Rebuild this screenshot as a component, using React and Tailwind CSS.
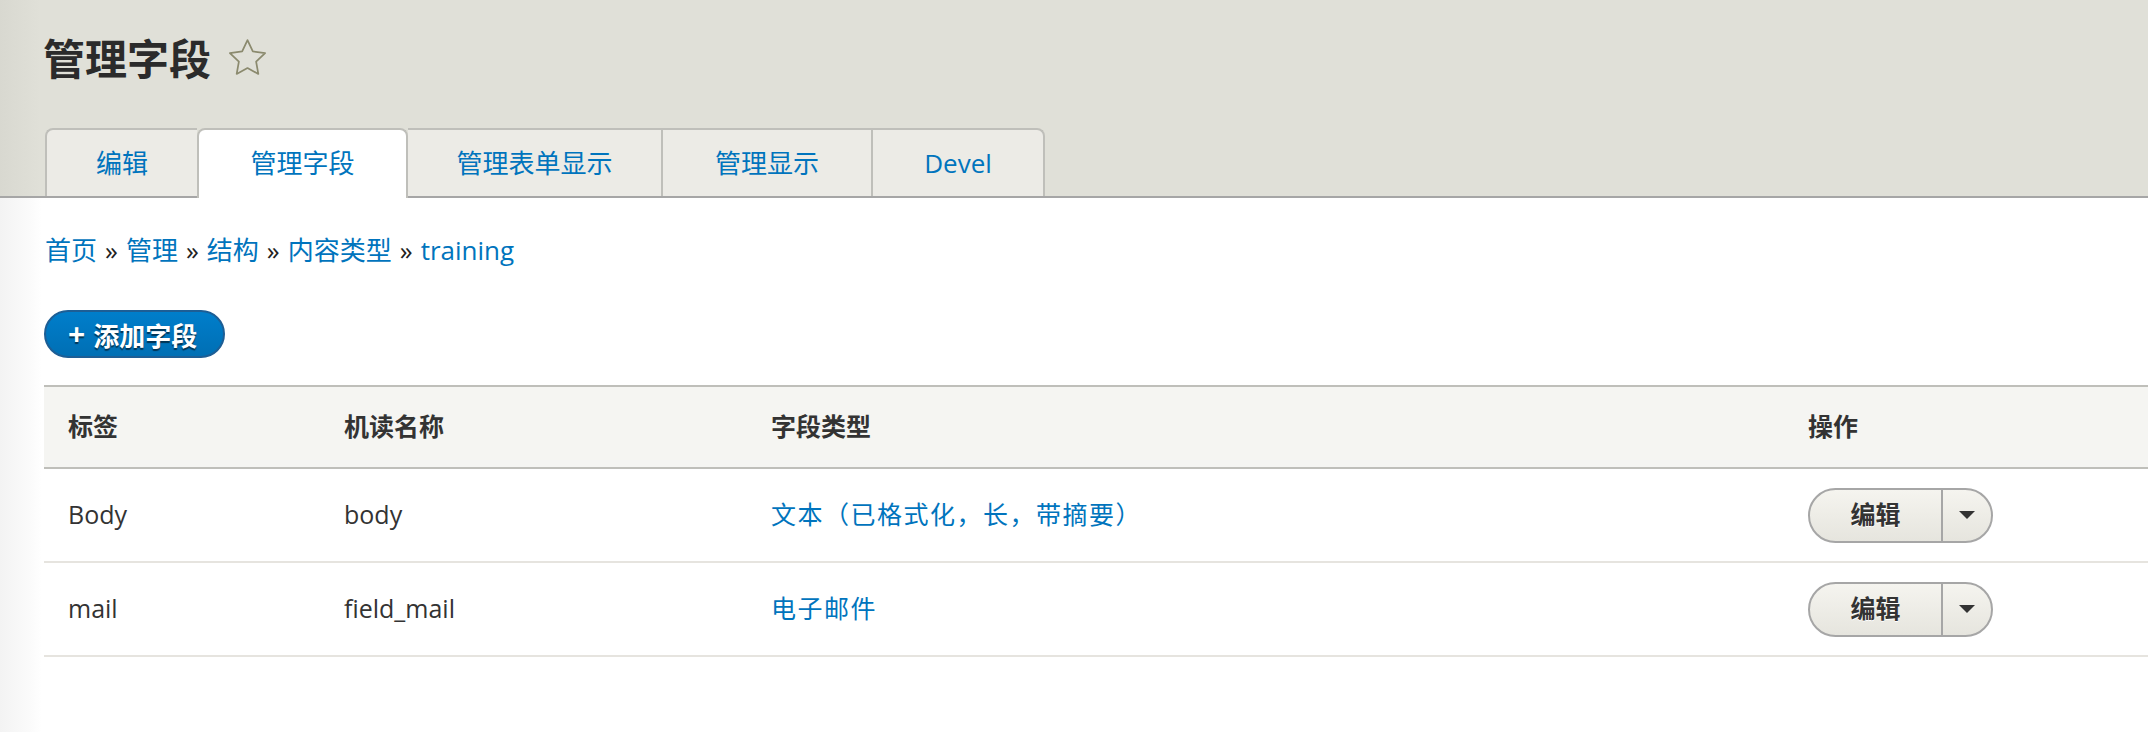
import React from "react";

const rows = [
  { label: "Body", machine: "body", type: "文本（已格式化，长，带摘要）" },
  { label: "mail", machine: "field_mail", type: "电子邮件" },
];

function Star() {
  return (
    <svg width="45" height="44" viewBox="0 0 24 24" fill="none" className="ml-[14px] mt-[2px]">
      <polygon
        points="12,2.2 14.9,8.4 21.6,9.3 16.7,14 17.9,20.7 12,17.5 6.1,20.7 7.3,14 2.4,9.3 9.1,8.4"
        stroke="#8b8a6e"
        strokeWidth="0.95"
        strokeLinejoin="round"
      />
    </svg>
  );
}

function EditButton() {
  return (
    <div className="flex h-[55px] w-[185px] rounded-full border-2 border-[#a6a6a6] bg-gradient-to-b from-[#f5f4ef] to-[#e6e5de] overflow-hidden">
      <button className="w-[131px] text-[25px] font-bold text-[#333] [text-shadow:0_1px_#fff]">
        编辑
      </button>
      <span className="flex flex-1 items-center justify-center border-l-2 border-[#a6a6a6]">
        <span className="block h-0 w-0 border-l-[8px] border-r-[8px] border-t-[8px] border-l-transparent border-r-transparent border-t-[#333]"></span>
      </span>
    </div>
  );
}

export default function App() {
  return (
    <div className="min-h-[732px] bg-[linear-gradient(to_right,#f3f3f3,#fafafa_28px,#fff_42px)] font-['Open_Sans','Noto_Sans_CJK_SC',sans-serif] text-[#333]">
      {/* Header */}
      <header className="border-b-2 border-[#a6a6a6] bg-[linear-gradient(to_right,#d8d8d0,#e0e0d8_40px)] pl-[43px] pt-[32px]">
        <div className="flex h-[50px] items-center">
          <h1 className="font-['Noto_Sans_CJK_SC',sans-serif] text-[42px] font-semibold leading-[50px] text-[#2b2b2b]">
            管理字段
          </h1>
          <Star />
        </div>
        <ul className="mt-[46px] flex h-[68px] items-start pl-[2px] text-[26px] text-[#0074bd]">
          <li className="flex h-[68px] w-[152px] items-center justify-center rounded-tl-[8px] border-l-2 border-t-2 border-[#bfbfba] bg-[#ecebe6]">
            编辑
          </li>
          <li className="relative flex h-[70px] w-[211px] items-center justify-center rounded-t-[8px] border-x-2 border-t-2 border-[#bfbfba] bg-white pb-[2px]">
            管理字段
          </li>
          <li className="flex h-[68px] w-[253px] items-center justify-center border-t-2 border-[#bfbfba] bg-[#ecebe6]">
            管理表单显示
          </li>
          <li className="flex h-[68px] w-[210px] items-center justify-center border-l-2 border-t-2 border-[#bfbfba] bg-[#ecebe6]">
            管理显示
          </li>
          <li className="flex h-[68px] w-[174px] items-center justify-center rounded-tr-[8px] border-x-2 border-t-2 border-[#bfbfba] bg-[#ecebe6]">
            Devel
          </li>
        </ul>
      </header>

      {/* Content */}
      <main className="pl-[42px] pt-[34px]">
        <nav className="ml-[3px] flex h-[36px] items-center gap-[8px] text-[26px]">
          <a className="text-[#0074bd]">首页</a>
          <span className="text-[#222]">»</span>
          <a className="text-[#0074bd]">管理</a>
          <span className="text-[#222]">»</span>
          <a className="text-[#0074bd]">结构</a>
          <span className="text-[#222]">»</span>
          <a className="text-[#0074bd]">内容类型</a>
          <span className="text-[#222]">»</span>
          <a className="text-[#0074bd]">training</a>
        </nav>

        <button className="ml-[2px] mt-[42px] flex h-[48px] items-center gap-[8px] rounded-full border-2 border-[#1d5e95] bg-gradient-to-b from-[#007ecb] to-[#006fb4] pl-[22px] pr-[26px] text-[26px] font-bold text-white [text-shadow:0_2px_1px_rgba(0,0,0,0.55)]">
          <span className="text-[30px] leading-none">+</span>
          <span className="font-['Noto_Sans_CJK_SC',sans-serif]">添加字段</span>
        </button>

        <div className="ml-[2px] mt-[27px]">
          <div className="grid h-[84px] grid-cols-[276px_427px_1037px_1fr] items-center border-y-2 border-[#bfbfba] bg-[#f5f5f2] text-[25px] font-bold">
            <div className="pl-[24px]">标签</div>
            <div className="pl-[24px]">机读名称</div>
            <div className="pl-[24px]">字段类型</div>
            <div className="pl-[24px]">操作</div>
          </div>
          {rows.map((row) => (
            <div
              key={row.machine}
              className="grid h-[94px] grid-cols-[276px_427px_1037px_1fr] items-center border-b-2 border-[#e6e4df] text-[25px]"
            >
              <div className="pl-[24px]">{row.label}</div>
              <div className="pl-[24px]">{row.machine}</div>
              <div className="pl-[24px]">
                <a className="text-[#0074bd] tracking-[1.5px]">{row.type}</a>
              </div>
              <div className="pl-[24px]">
                <EditButton />
              </div>
            </div>
          ))}
        </div>
      </main>
    </div>
  );
}
